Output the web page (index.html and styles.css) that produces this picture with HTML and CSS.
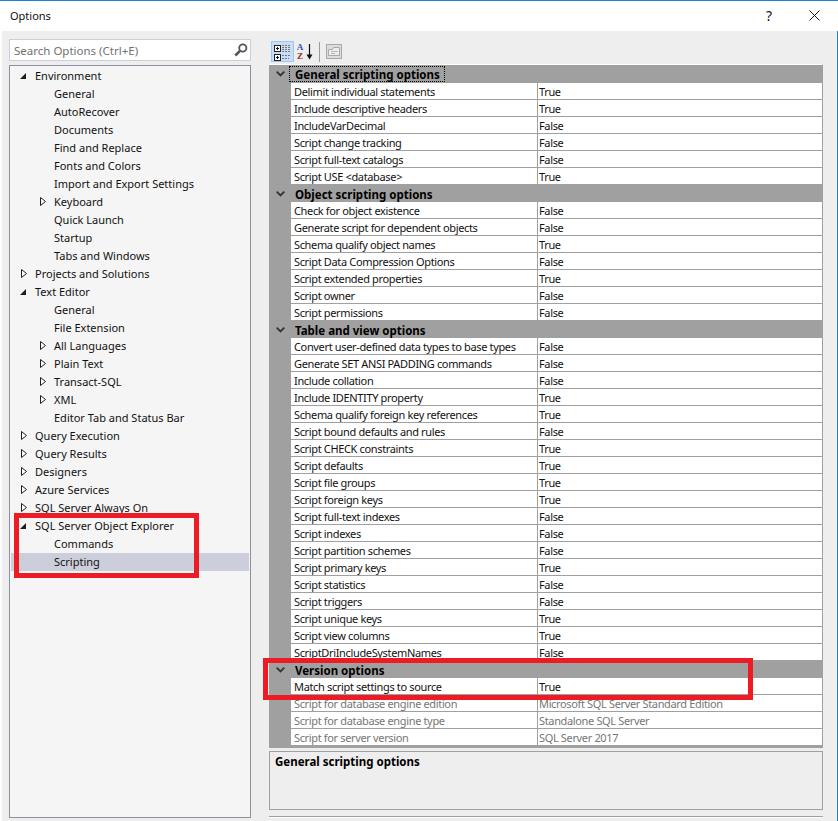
FILE: index.html
```html
<!DOCTYPE html>
<html lang="en">
<head>
<meta charset="utf-8">
<title>Options</title>
<link rel="stylesheet" href="styles.css">
</head>
<body>
<svg class="defs" width="0" height="0">
  <symbol id="open" viewBox="0 0 6 6"><path d="M6 0V6H0Z" fill="#1e1e1e"/></symbol>
  <symbol id="closed" viewBox="0 0 6 9"><path d="M.5.5V8.5L5.5 4.5Z" fill="#fff" stroke="#1e1e1e"/></symbol>
  <symbol id="chev" viewBox="0 0 9 6"><path d="M.7.7 4.5 4.5 8.3.7" fill="none" stroke="#333" stroke-width="1.8"/></symbol>
</svg>
<div class="window">
  <header class="titlebar">
    <span class="title">Options</span>
    <span class="help">?</span>
    <svg class="close" width="11" height="11" viewBox="0 0 11 11"><path d="M.5.5 10.5 10.5M10.5.5.5 10.5" stroke="#111" stroke-width="1"/></svg>
  </header>
  <div class="content">
    <aside class="left">
      <div class="search">
        <span class="search-text">Search Options (Ctrl+E)</span>
        <svg width="14" height="14" viewBox="0 0 14 14"><circle cx="8.8" cy="5" r="3.6" fill="none" stroke="#555" stroke-width="1.8"/><path d="M6 7.8 1.3 12.5" stroke="#555" stroke-width="2.6"/></svg>
      </div>
      <nav class="tree">
        <div class="node l0"><svg class="tw" width="6" height="6"><use href="#open"/></svg><span>Environment</span></div>
        <div class="node l1"><i class="tw"></i><span>General</span></div>
        <div class="node l1"><i class="tw"></i><span>AutoRecover</span></div>
        <div class="node l1"><i class="tw"></i><span>Documents</span></div>
        <div class="node l1"><i class="tw"></i><span>Find and Replace</span></div>
        <div class="node l1"><i class="tw"></i><span>Fonts and Colors</span></div>
        <div class="node l1"><i class="tw"></i><span>Import and Export Settings</span></div>
        <div class="node l1"><svg class="tw c" width="6" height="9"><use href="#closed"/></svg><span>Keyboard</span></div>
        <div class="node l1"><i class="tw"></i><span>Quick Launch</span></div>
        <div class="node l1"><i class="tw"></i><span>Startup</span></div>
        <div class="node l1"><i class="tw"></i><span>Tabs and Windows</span></div>
        <div class="node l0"><svg class="tw c" width="6" height="9"><use href="#closed"/></svg><span>Projects and Solutions</span></div>
        <div class="node l0"><svg class="tw" width="6" height="6"><use href="#open"/></svg><span>Text Editor</span></div>
        <div class="node l1"><i class="tw"></i><span>General</span></div>
        <div class="node l1"><i class="tw"></i><span>File Extension</span></div>
        <div class="node l1"><svg class="tw c" width="6" height="9"><use href="#closed"/></svg><span>All Languages</span></div>
        <div class="node l1"><svg class="tw c" width="6" height="9"><use href="#closed"/></svg><span>Plain Text</span></div>
        <div class="node l1"><svg class="tw c" width="6" height="9"><use href="#closed"/></svg><span>Transact-SQL</span></div>
        <div class="node l1"><svg class="tw c" width="6" height="9"><use href="#closed"/></svg><span>XML</span></div>
        <div class="node l1"><i class="tw"></i><span>Editor Tab and Status Bar</span></div>
        <div class="node l0"><svg class="tw c" width="6" height="9"><use href="#closed"/></svg><span>Query Execution</span></div>
        <div class="node l0"><svg class="tw c" width="6" height="9"><use href="#closed"/></svg><span>Query Results</span></div>
        <div class="node l0"><svg class="tw c" width="6" height="9"><use href="#closed"/></svg><span>Designers</span></div>
        <div class="node l0"><svg class="tw c" width="6" height="9"><use href="#closed"/></svg><span>Azure Services</span></div>
        <div class="node l0"><svg class="tw c" width="6" height="9"><use href="#closed"/></svg><span>SQL Server Always On</span></div>
        <div class="node l0"><svg class="tw" width="6" height="6"><use href="#open"/></svg><span>SQL Server Object Explorer</span></div>
        <div class="node l1"><i class="tw"></i><span>Commands</span></div>
        <div class="node l1 selected"><i class="tw"></i><span>Scripting</span></div>
      </nav>
    </aside>
    <main class="right">
      <div class="toolbar">
        <button class="tool active" type="button" aria-label="Categorized">
          <svg width="21" height="19" viewBox="0 0 21 19">
            <rect x="2.5" y="3.5" width="6" height="6" fill="#fff" stroke="#222"/><path d="M4 6.5h3M5.5 5v3" stroke="#111"/>
            <rect x="2.5" y="12.5" width="6" height="6" fill="#fff" stroke="#222"/><path d="M4 15.5h3M5.5 14v3" stroke="#111"/>
            <path d="M10 3.5h9M10 5.5h9M10 7.5h9M10 9.5h9M10 13.5h9M10 16.5h7" stroke="#777" stroke-dasharray="2 1"/>
          </svg>
        </button>
        <span class="sort" aria-label="Alphabetical">
          <span class="sort-letters"><b class="az-a">A</b><b class="az-z">Z</b></span>
          <svg width="7" height="16" viewBox="0 0 7 16"><path d="M3.5 0V12" stroke="#111" stroke-width="1.2"/><path d="M.5 10.5H6.5L3.5 15.5Z" fill="#111"/></svg>
        </span>
        <span class="tool-sep"></span>
        <svg class="pages" width="16" height="15" viewBox="0 0 16 15">
          <rect x=".5" y=".5" width="15" height="14" fill="#dcdcdc" stroke="#a8a8a8"/>
          <path d="M2.5 5.5h4l1-2h6v8h-11z" fill="#eee" stroke="#a8a8a8"/><path d="M5 7.5h7M5 9.5h4" stroke="#b5b5b5"/>
        </svg>
      </div>
      <div class="grid">
        <div class="cat first"><svg class="chev" width="9" height="6"><use href="#chev"/></svg><span class="cat-label focused">General scripting options</span></div>
        <div class="row"><span class="name">Delimit individual statements</span><span class="value">True</span></div>
        <div class="row"><span class="name">Include descriptive headers</span><span class="value">True</span></div>
        <div class="row"><span class="name">IncludeVarDecimal</span><span class="value">False</span></div>
        <div class="row"><span class="name">Script change tracking</span><span class="value">False</span></div>
        <div class="row"><span class="name">Script full-text catalogs</span><span class="value">False</span></div>
        <div class="row"><span class="name">Script USE &lt;database&gt;</span><span class="value">True</span></div>
        <div class="cat"><svg class="chev" width="9" height="6"><use href="#chev"/></svg><span class="cat-label">Object scripting options</span></div>
        <div class="row"><span class="name">Check for object existence</span><span class="value">False</span></div>
        <div class="row"><span class="name">Generate script for dependent objects</span><span class="value">False</span></div>
        <div class="row"><span class="name">Schema qualify object names</span><span class="value">True</span></div>
        <div class="row"><span class="name">Script Data Compression Options</span><span class="value">False</span></div>
        <div class="row"><span class="name">Script extended properties</span><span class="value">True</span></div>
        <div class="row"><span class="name">Script owner</span><span class="value">False</span></div>
        <div class="row"><span class="name">Script permissions</span><span class="value">False</span></div>
        <div class="cat"><svg class="chev" width="9" height="6"><use href="#chev"/></svg><span class="cat-label">Table and view options</span></div>
        <div class="row"><span class="name">Convert user-defined data types to base types</span><span class="value">False</span></div>
        <div class="row"><span class="name">Generate SET ANSI PADDING commands</span><span class="value">False</span></div>
        <div class="row"><span class="name">Include collation</span><span class="value">False</span></div>
        <div class="row"><span class="name">Include IDENTITY property</span><span class="value">True</span></div>
        <div class="row"><span class="name">Schema qualify foreign key references</span><span class="value">True</span></div>
        <div class="row"><span class="name">Script bound defaults and rules</span><span class="value">False</span></div>
        <div class="row"><span class="name">Script CHECK constraints</span><span class="value">True</span></div>
        <div class="row"><span class="name">Script defaults</span><span class="value">True</span></div>
        <div class="row"><span class="name">Script file groups</span><span class="value">True</span></div>
        <div class="row"><span class="name">Script foreign keys</span><span class="value">True</span></div>
        <div class="row"><span class="name">Script full-text indexes</span><span class="value">False</span></div>
        <div class="row"><span class="name">Script indexes</span><span class="value">False</span></div>
        <div class="row"><span class="name">Script partition schemes</span><span class="value">False</span></div>
        <div class="row"><span class="name">Script primary keys</span><span class="value">True</span></div>
        <div class="row"><span class="name">Script statistics</span><span class="value">False</span></div>
        <div class="row"><span class="name">Script triggers</span><span class="value">False</span></div>
        <div class="row"><span class="name">Script unique keys</span><span class="value">True</span></div>
        <div class="row"><span class="name">Script view columns</span><span class="value">True</span></div>
        <div class="row"><span class="name">ScriptDriIncludeSystemNames</span><span class="value">False</span></div>
        <div class="cat"><svg class="chev" width="9" height="6"><use href="#chev"/></svg><span class="cat-label">Version options</span></div>
        <div class="row"><span class="name">Match script settings to source</span><span class="value">True</span></div>
        <div class="row disabled"><span class="name">Script for database engine edition</span><span class="value">Microsoft SQL Server Standard Edition</span></div>
        <div class="row disabled"><span class="name">Script for database engine type</span><span class="value">Standalone SQL Server</span></div>
        <div class="row disabled"><span class="name">Script for server version</span><span class="value">SQL Server 2017</span></div>
      </div>
      <div class="description"><strong>General scripting options</strong></div>
      <div class="footer-line"></div>
    </main>
  </div>
  <div class="callout callout-tree"></div>
  <div class="callout callout-grid"></div>
</div>
</body>
</html>
```
FILE: styles.css
```css
* { box-sizing: border-box; }
html, body { margin: 0; padding: 0; background: #fff; }
body {
  font-family: "Noto Sans", "Open Sans", sans-serif;
  font-size: 11px;
  color: #111;
  overflow: hidden;
}
.defs { position: absolute; }
.window {
  position: relative;
  width: 838px;
  height: 821px;
  border-top: 1px solid #1883d7;
  display: flex;
  flex-direction: column;
  background: #fff;
}
.titlebar {
  height: 30px;
  flex: none;
  display: flex;
  align-items: center;
  padding: 0 18px 1px 10px;
}
.title { flex: 1; }
.help { margin-right: 37px; font-size: 14px; }
.content {
  flex: 1;
  min-height: 0;
  display: flex;
  margin-left: 2px;
  background: #eeeeee;
  border-right: 1px solid #1883d7;
  padding: 8px 0 0 7px;
}
.left { width: 242px; flex: none; display: flex; flex-direction: column; }
.search {
  height: 22px;
  flex: none;
  background: #fff;
  border: 1px solid #cccedb;
  display: flex;
  align-items: center;
  justify-content: space-between;
  padding: 0 2px 0 4px;
  margin-bottom: 4px;
}
.search-text { color: #717171; font-size: 11.5px; }
.tree {
  height: 753px;
  background: #f5f5f5;
  border: 1px solid #8e8e9e;
  padding: 1px;
}
.node { height: 18px; padding-bottom: 1px; display: flex; align-items: center; color: #111; white-space: nowrap; }
.l0 { padding-left: 9px; }
.l1 { padding-left: 28px; }
.tw { display: block; width: 15px; flex: none; }
svg.tw { width: 6px; margin-right: 9px; }
svg.tw.c { margin-left: 1px; margin-right: 8px; }
.selected { background: #cccedb; }
.right { width: 554px; flex: none; margin-left: 18px; display: flex; flex-direction: column; }
.toolbar { height: 25px; flex: none; display: flex; align-items: flex-start; padding: 2px 0 0 2px; }
.tool {
  width: 23px;
  height: 21px;
  padding: 0;
  margin: 0;
  background: #c9def5;
  border: 1px solid #99c8f0;
  display: flex;
  align-items: center;
  justify-content: center;
}
.sort { width: 20px; height: 21px; margin-left: 2px; display: flex; align-items: center; gap: 2px; }
.sort-letters { display: flex; flex-direction: column; width: 8px; font-family: "Liberation Serif", serif; font-size: 9px; line-height: 9px; align-items: center; }
.az-a { color: #2f56a8; }
.az-z { color: #8e2b2b; }
.tool-sep { width: 1px; height: 20px; margin: 1px 6px 0 3px; background: #9a9a9a; }
.pages { margin-top: 3px; }
.grid {
  height: 684px;
  flex: none;
  background: #a0a0a0;
  border-top: 1px solid #fff;
  border-bottom: 1px solid #a0a0a0;
  border-right: 1px solid #a0a0a0;
  padding-bottom: 1px;
}
.cat { height: 17px; display: flex; align-items: center; font-weight: 700; font-size: 11.5px; color: #000; }
.cat.first { height: 18px; }
.chev { margin-left: 7px; margin-right: 5px; flex: none; }
.cat-label { padding: 0 4px 0 5px; height: 14px; line-height: 15px; }
.focused { outline: 1px dotted #000; outline-offset: 0; line-height: 16px; }
.row { height: 17px; margin-left: 22px; display: flex; background: #fff; border-bottom: 1px solid #a0a0a0; line-height: 18px; letter-spacing: -0.35px; color: #111; white-space: nowrap; }
.name { width: 247px; flex: none; padding-left: 3px; border-right: 1px solid #a0a0a0; }
.value { flex: 1; padding-left: 1px; }
.disabled { color: #767676; }
.description {
  height: 59px;
  flex: none;
  margin-top: 3px;
  border: 1px solid #a0a0a0;
  padding: 2px 5px;
  line-height: 16px;
  color: #000;
}
.description strong { font-size: 11.5px; }
.footer-line { height: 2px; flex: none; margin-top: 6px; border-top: 1px solid #a0a0a0; background: #fff; }
.callout { position: absolute; border: 5px solid #ed1c24; pointer-events: none; }
.callout-tree { left: 14px; top: 512px; width: 185px; height: 65px; }
.callout-grid { left: 263px; top: 657px; width: 490px; height: 42px; }
```
